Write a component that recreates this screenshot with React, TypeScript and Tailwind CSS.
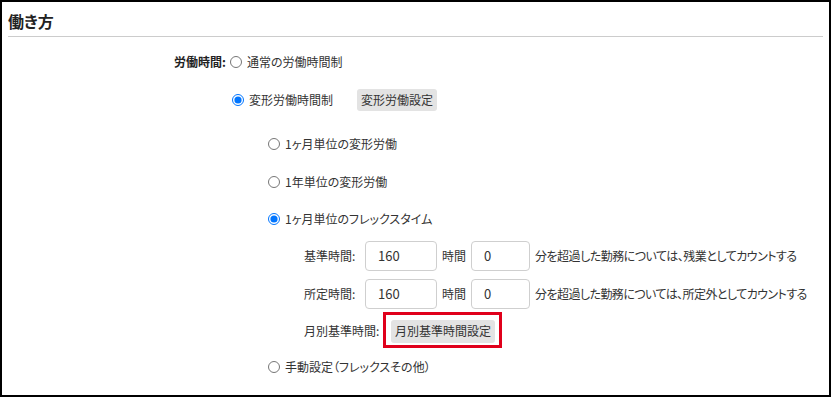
import React from 'react';

const font = "font-['Noto_Sans_CJK_JP','Noto_Sans',sans-serif] [font-feature-settings:'palt']";

function Radio({ checked }: { checked?: boolean }) {
    return (
        <input
            type="radio"
            readOnly
            checked={!!checked}
            className="m-0 w-[12px] h-[12px] shrink-0 accent-[#0075ff]"
        />
    );
}

function Row({ indent, top, children }: { indent: string; top: string; children: React.ReactNode }) {
    return <div className={`flex items-center h-[30px] ${indent} ${top}`}>{children}</div>;
}

function NumInput({ value, width }: { value: string; width: string }) {
    return (
        <div className={`${width} h-[30px] border border-[#cfcfcf] rounded-[4px] flex items-center pl-[12px] text-[13px] text-[#333]`}>
            {value}
        </div>
    );
}

export default function App() {
    return (
        <div className={`w-[831px] h-[397px] border-2 border-black bg-white text-[12px] text-[#333] ${font}`}>
            <div className="mx-[6px] h-[35px] border-b border-[#cccccc] flex items-center">
                <h1 className="text-[16px] font-bold text-[#222] pt-[4px]">働き方</h1>
            </div>

            <div className="flex flex-col">
                <Row indent="pl-[131px]" top="mt-[10px]">
                    <span className="w-[97px] text-right font-bold text-[#222] pr-[4px]">労働時間:</span>
                    <Radio />
                    <span className="ml-[5px]">通常の労働時間制</span>
                </Row>

                <Row indent="pl-[230px]" top="mt-[8px]">
                    <Radio checked />
                    <span className="ml-[5px]">変形労働時間制</span>
                    <button className="ml-[24px] h-[22px] px-[4px] bg-[#e3e3e3] rounded-[3px] text-[#333]">変形労働設定</button>
                </Row>

                <Row indent="pl-[266px]" top="mt-[14px]">
                    <Radio />
                    <span className="ml-[5px]">1ヶ月単位の変形労働</span>
                </Row>

                <Row indent="pl-[266px]" top="mt-[8px]">
                    <Radio />
                    <span className="ml-[5px]">1年単位の変形労働</span>
                </Row>

                <Row indent="pl-[266px]" top="mt-[7px]">
                    <Radio checked />
                    <span className="ml-[5px]">1ヶ月単位のフレックスタイム</span>
                </Row>

                <Row indent="pl-[302px]" top="mt-[7px]">
                    <span className="w-[61px]">基準時間:</span>
                    <NumInput value="160" width="w-[72px]" />
                    <span className="mx-[5px]">時間</span>
                    <NumInput value="0" width="w-[59px]" />
                    <span className="ml-[5px] tracking-[-0.5px]">分を超過した勤務については、残業としてカウントする</span>
                </Row>

                <Row indent="pl-[302px]" top="mt-[8px]">
                    <span className="w-[61px]">所定時間:</span>
                    <NumInput value="160" width="w-[72px]" />
                    <span className="mx-[5px]">時間</span>
                    <NumInput value="0" width="w-[59px]" />
                    <span className="ml-[5px] tracking-[-0.55px]">分を超過した勤務については、所定外としてカウントする</span>
                </Row>

                <Row indent="pl-[302px]" top="mt-[7px]">
                    <span className="w-[87px]">月別基準時間:</span>
                    <span className="relative">
                        <button className="h-[23px] px-[4px] bg-[#e3e3e3] rounded-[3px] text-[#333]">月別基準時間設定</button>
                        <span className="absolute -left-[8px] -right-[7px] -top-[8px] -bottom-[5px] border-[3px] border-[#e0001b]" />
                    </span>
                </Row>

                <Row indent="pl-[266px]" top="mt-[6px]">
                    <Radio />
                    <span className="ml-[5px]">手動設定（フレックスその他）</span>
                </Row>
            </div>
        </div>
    );
}
